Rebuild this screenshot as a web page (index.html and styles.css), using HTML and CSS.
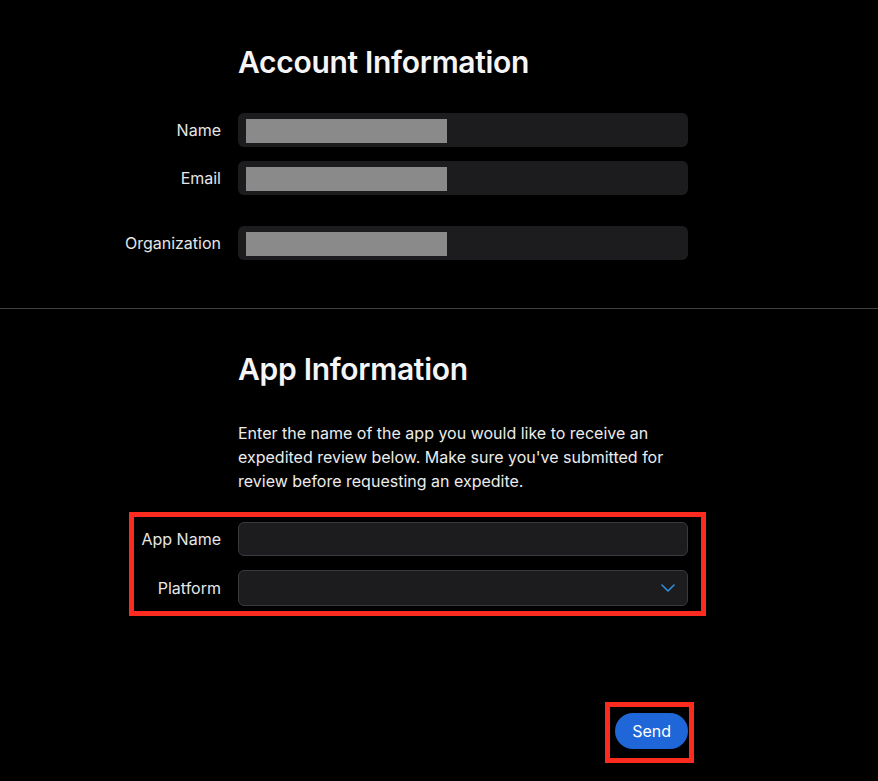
FILE: index.html
```html
<!DOCTYPE html>
<html lang="en">
<head>
  <meta charset="UTF-8" />
  <meta name="viewport" content="width=device-width, initial-scale=1.0"/>
  <link rel="stylesheet" href="styles.css">
</head>
<body>

  <section class="section account">
    <div class="form">
      <h1 class="title">Account Information</h1>

      <label class="label">Name</label>
      <div class="field readonly"><span class="redacted"></span></div>

      <label class="label">Email</label>
      <div class="field readonly"><span class="redacted"></span></div>

      <div class="spacer"></div>

      <label class="label">Organization</label>
      <div class="field readonly"><span class="redacted"></span></div>
    </div>
  </section>

  <section class="section app">
    <div class="form">
      <h1 class="title">App Information</h1>

      <p class="intro">Enter the name of the app you would like to receive an expedited review below. Make sure you've submitted for review before requesting an expedite.</p>

      <div class="highlight rows">
        <label class="label" for="appName">App Name</label>
        <input class="field input" id="appName" type="text">

        <label class="label" for="platform">Platform</label>
        <div class="field input select" id="platform">
          <svg width="14" height="8" viewBox="0 0 14 8">
            <path d="M1 1 L7 7 L13 1" fill="none" stroke="#2f8fdc" stroke-width="1.6" stroke-linecap="round" stroke-linejoin="round"/>
          </svg>
        </div>
      </div>

      <div class="actions">
        <button class="btn highlight send-mark">Send</button>
      </div>
    </div>
  </section>

</body>
</html>
```

FILE: styles.css
```css
* {
  margin: 0;
  padding: 0;
  box-sizing: border-box;
}

html, body {
  width: 100%;
  height: 100%;
  overflow: hidden;
  background: #000;
  color: #f5f5f7;
  font-family: Inter, "Noto Sans", sans-serif;
}

.section.account {
  padding: 42px 0 48px;
  border-bottom: 1px solid #424244;
}

.section.app {
  padding-top: 40px;
}

.form {
  display: grid;
  grid-template-columns: 221px 450px;
  column-gap: 17px;
  row-gap: 14px;
  align-items: center;
}

.rows {
  grid-column: 1 / 3;
  display: grid;
  grid-template-columns: 221px 450px;
  column-gap: 17px;
  row-gap: 14px;
  align-items: center;
}

.title {
  grid-column: 2;
  font-size: 30px;
  line-height: 40px;
  font-weight: 600;
  letter-spacing: -0.3px;
  margin-bottom: 17px;
}

.label {
  grid-column: 1;
  text-align: right;
  font-size: 16px;
  color: #e6e6e6;
}

.field {
  grid-column: 2;
  height: 34px;
  background: #1c1c1e;
  border-radius: 6px;
}

.readonly {
  padding: 6px 8px;
}

.redacted {
  display: block;
  width: 201px;
  height: 24px;
  background: #8a8a8a;
}

.spacer {
  grid-column: 1 / 3;
  height: 3px;
}

.intro {
  grid-column: 2;
  font-size: 16px;
  line-height: 24px;
  color: #ececec;
  margin-top: 1px;
  margin-bottom: 15px;
}

.input {
  border: 1px solid #3a3a3c;
  outline: none;
  color: #fff;
  font: inherit;
}

.select {
  height: 36px;
  display: flex;
  align-items: center;
  justify-content: flex-end;
  padding-right: 12px;
}

.actions {
  grid-column: 2;
  display: flex;
  justify-content: flex-end;
  margin-top: 93px;
}

.btn {
  height: 36px;
  padding: 0 17px;
  border: none;
  border-radius: 18px;
  background: #1f67d8;
  color: #fff;
  font: inherit;
  font-size: 16px;
}

.highlight {
  position: relative;
}

.highlight::after {
  content: "";
  position: absolute;
  border: 5px solid #fb2c1f;
  pointer-events: none;
}

.rows::after {
  top: -10px;
  bottom: -10px;
  left: 129px;
  right: -18px;
}

.send-mark::after {
  top: -11px;
  bottom: -14px;
  left: -10px;
  right: -6px;
}
```
